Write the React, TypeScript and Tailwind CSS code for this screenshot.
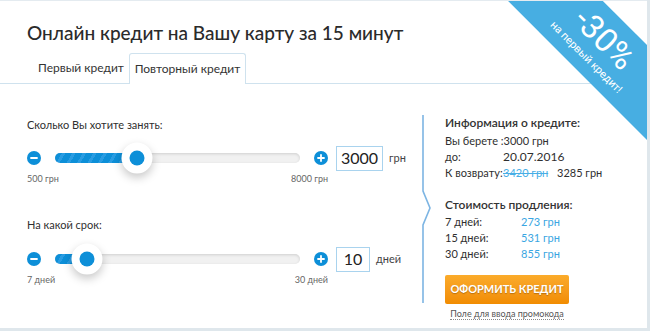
import React from 'react';

const font = { fontFamily: 'Lato, "Open Sans", "Noto Sans", sans-serif' };

function RoundBtn({ plus = false }: { plus?: boolean }) {
    return (
        <div className="flex h-[14px] w-[14px] shrink-0 items-center justify-center rounded-full bg-[#0d8fd8]">
            <svg width="8" height="8" viewBox="0 0 8 8">
                <path d="M1 4h6" stroke="#fff" strokeWidth="1.8" strokeLinecap="round" />
                {plus && <path d="M4 1v6" stroke="#fff" strokeWidth="1.8" strokeLinecap="round" />}
            </svg>
        </div>
    );
}

function Slider({ fill, value, unit, inputW, min, max }: { fill: number; value: string; unit: string; inputW: string; min: string; max: string }) {
    return (
        <div>
            <div className="flex h-[30px] items-center">
                <RoundBtn />
                <div className="relative ml-[14px] h-[10px] w-[245px] shrink-0 rounded-full bg-[#f1f1f1] shadow-[inset_0_1px_3px_rgba(0,0,0,0.14)]">
                    <div
                        className="h-full rounded-full bg-[repeating-linear-gradient(120deg,#0d8fd8_0_6px,#2a9ce2_6px_9px)]"
                        style={{ width: fill }}
                    />
                    <div
                        className="absolute top-1/2 flex h-[31px] w-[31px] -translate-x-1/2 -translate-y-1/2 items-center justify-center rounded-full bg-white shadow-[0_4px_10px_rgba(0,0,0,0.22)]"
                        style={{ left: fill }}
                    >
                        <div className="h-[15px] w-[15px] rounded-full bg-[#0d8fd8]" />
                    </div>
                </div>
                <div className="ml-[14px] shrink-0">
                    <RoundBtn plus />
                </div>
                <div className={`ml-[8px] flex h-[25px] shrink-0 ${inputW} items-center justify-center border border-[#a9d3ee] text-[16px] text-[#222]`}>
                    {value}
                </div>
                <span className="ml-[6px] shrink-0 text-[11px] text-[#444]">{unit}</span>
            </div>
            <div className="flex w-[301px] justify-between text-[9px] leading-[12px] text-[#666]">
                <span>{min}</span>
                <span>{max}</span>
            </div>
        </div>
    );
}

export default function App() {
    return (
        <div className="h-[331px] w-[650px] bg-[#dfe7ec]" style={font}>
            <div className="relative h-[328px] w-[647px] overflow-hidden border-t border-[#e4ebf0] bg-white text-[#2f2f2f]">
                {/* header */}
                <div className="h-[53px] pl-[27px] pt-[18px] text-[19px] font-medium leading-[28px] text-[#2b2b2b]">
                    Онлайн кредит на Вашу карту за 15 минут
                </div>

                {/* tabs */}
                <div className="flex h-[30px] items-end border-b border-[#cfe2ee] pl-[38px]">
                    <div className="flex h-[30px] w-[91px] items-center text-[12px] text-[#333]">Первый кредит</div>
                    <div className="-mb-px flex h-[31px] w-[117px] items-center justify-center rounded-t-[3px] border border-b-0 border-[#cfe2ee] bg-white text-[12px] text-[#333]">
                        Повторный кредит
                    </div>
                </div>

                {/* body */}
                <div className="flex">
                    <div className="w-[400px] shrink-0 pl-[27px] pt-[33px]">
                        <div className="text-[11px] leading-[16px]">Сколько Вы хотите занять:</div>
                        <div className="mt-[10px]">
                            <Slider fill={82} value="3000" unit="грн" inputW="w-[47px]" min="500 грн" max="8000 грн" />
                        </div>
                        <div className="mt-[32px] text-[11px] leading-[16px]">На какой срок:</div>
                        <div className="mt-[11px]">
                            <Slider fill={32} value="10" unit="дней" inputW="w-[34px]" min="7 дней" max="30 дней" />
                        </div>
                    </div>

                    <div className="flex pt-[31px]">
                        <svg width="14" height="188" viewBox="0 0 14 188" className="ml-[18px] shrink-0">
                            <path d="M5 0V76L12 93L5 110V188" fill="none" stroke="#7db5e3" strokeWidth="1.6" />
                        </svg>
                        <div className="ml-[13px] w-[180px]">
                            <div className="text-[12px] font-semibold leading-[16px] text-[#333]">Информация о кредите:</div>
                            <div className="mt-[2px] text-[11px] leading-[16px]">
                                <div>Вы берете :3000 грн</div>
                                <div className="flex">
                                    <span className="w-[58px]">до:</span>
                                    <span className="text-[12px]">20.07.2016</span>
                                </div>
                                <div className="flex">
                                    <span className="w-[58px]">К возврату:</span>
                                    <span className="w-[54px] text-[#47aee6] line-through">3420 грн</span>
                                    <span>3285 грн</span>
                                </div>
                            </div>
                            <div className="mt-[16px] text-[12px] font-semibold leading-[16px] text-[#333]">Стоимость продления:</div>
                            <div className="mt-px text-[11px] leading-[16px]">
                                {[
                                    ['7 дней:', '273 грн'],
                                    ['15 дней:', '531 грн'],
                                    ['30 дней:', '855 грн'],
                                ].map(([d, p]) => (
                                    <div key={d} className="flex">
                                        <span className="w-[76px]">{d}</span>
                                        <span className="text-[#3aa6e2]">{p}</span>
                                    </div>
                                ))}
                            </div>
                            <div className="mt-[13px] flex h-[29px] w-[124px] items-center justify-center rounded-[2px] bg-gradient-to-b from-[#fbab2a] to-[#f18c00] text-[11px] font-bold text-white [text-shadow:0_1px_1px_rgba(0,0,0,0.25)]">
                                ОФОРМИТЬ КРЕДИТ
                            </div>
                            <div className="mt-px w-[124px] text-center leading-[12px]">
                                <span className="border-b border-dotted border-[#888] text-[9px] text-[#555]">Поле для ввода промокода</span>
                            </div>
                        </div>
                    </div>
                </div>

                {/* ribbon */}
                <div className="absolute left-[449px] top-[10px] flex h-[67px] w-[300px] rotate-45 flex-col items-center justify-center gap-[3px] bg-[#47aee2] text-white">
                    <div className="text-[33px] leading-[32px]" style={{ fontFamily: 'Roboto, "Open Sans", sans-serif' }}>-30%</div>
                    <div className="text-[11px] leading-[13px]" style={{ fontFamily: 'Roboto, "Open Sans", sans-serif' }}>на первый кредит!</div>
                </div>
            </div>
        </div>
    );
}
